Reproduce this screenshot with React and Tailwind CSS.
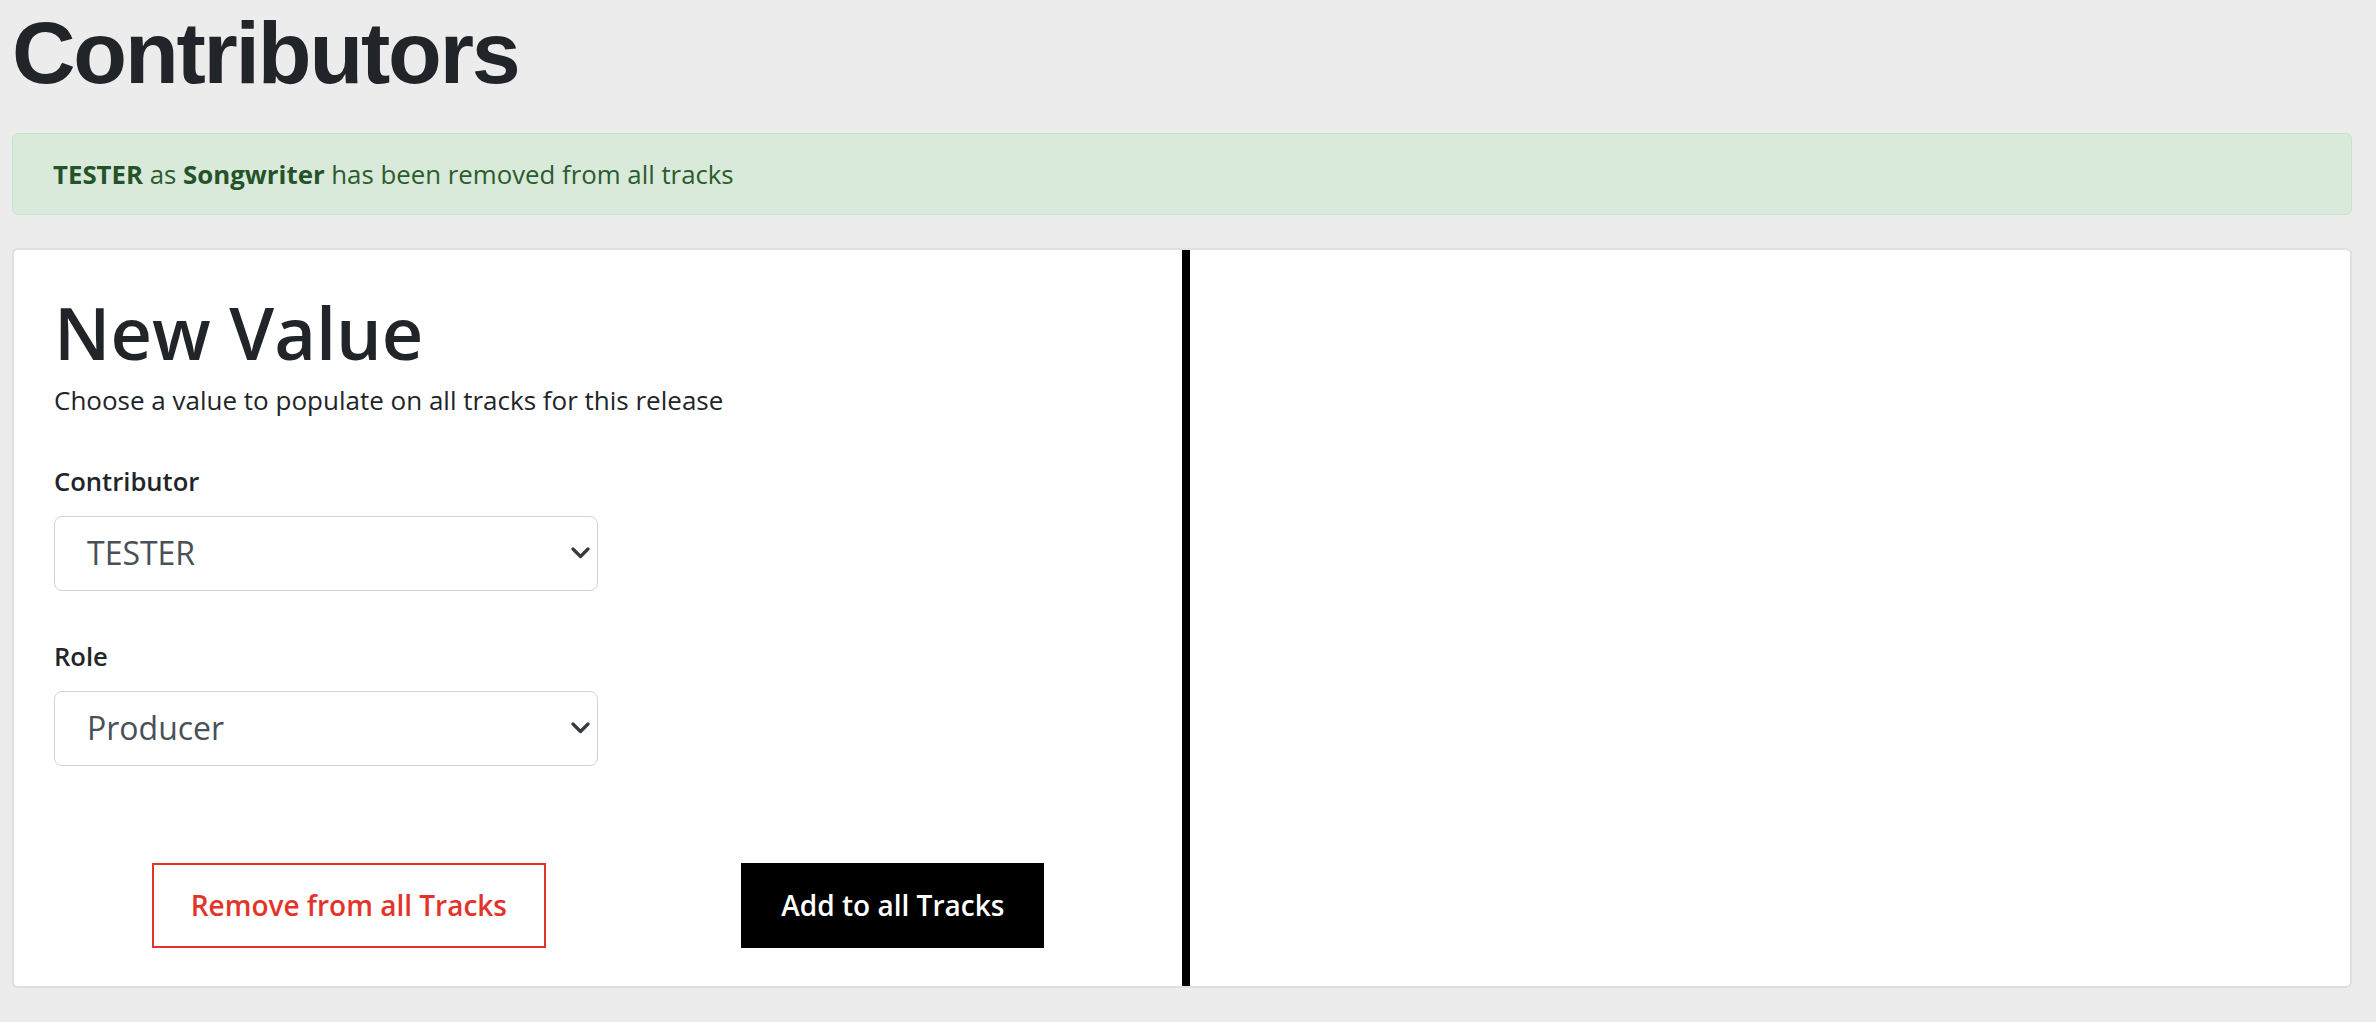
import { useState } from 'react';

const contributors = ['TESTER'];
const roles = ['Producer', 'Songwriter', 'Composer', 'Performer'];

const Chevron = () => (
  <svg
    className="pointer-events-none absolute right-[8px] top-1/2 -translate-y-1/2"
    width="19"
    height="13"
    viewBox="0 0 19 13"
    fill="none"
  >
    <path d="M2 2.5l7.5 7.5L17 2.5" stroke="#343a40" strokeWidth="3.2" strokeLinecap="round" strokeLinejoin="round" />
  </svg>
);

const Field = ({ label, value, options, onChange, className = '' }) => (
  <div className={className}>
    <label className="mb-4 block text-[25.6px] font-semibold leading-[36px] text-[#212529]">{label}</label>
    <div className="relative w-1/2">
      <select
        value={value}
        onChange={(e) => onChange(e.target.value)}
        className="h-[75px] w-full appearance-none rounded-lg border-[1.5px] border-[#cfd3d7] bg-white pl-[32px] pr-12 text-[32px] text-[#495057] outline-none"
      >
        {options.map((opt) => (
          <option key={opt} value={opt}>
            {opt}
          </option>
        ))}
      </select>
      <Chevron />
    </div>
  </div>
);

const App = () => {
  const [contributor, setContributor] = useState('TESTER');
  const [role, setRole] = useState('Producer');

  return (
    <div className="min-h-screen bg-[#ececec] pl-3 pr-6 font-['Open_Sans',sans-serif] text-[#212529]">
      <h1 className="font-['Liberation_Sans',Arial,sans-serif] text-[88px] font-bold leading-[1.2] tracking-[-0.025em] text-[#212529]">
        Contributors
      </h1>

      {/* Success alert */}
      <div className="mt-[27px] rounded-md border border-[#c6e2c9] bg-[#d9eadb] px-10 py-[22px] text-[25.8px] leading-[36px] text-[#2c5b2d]">
        <strong className="font-bold text-[#24532a]">TESTER</strong> as{' '}
        <strong className="font-bold text-[#24532a]">Songwriter</strong> has been removed from all tracks
      </div>

      {/* Card */}
      <div className="mt-[33px] grid grid-cols-2 rounded-md border-2 border-[#e0e0e0] bg-white">
        <div className="px-10 pb-[38px] pt-[39px]">
          <h2 className="text-[72px] font-semibold leading-[1.2] text-[#212529]">New Value</h2>
          <p className="mt-[7px] text-[26px] leading-[36px] text-[#212529]">
            Choose a value to populate on all tracks for this release
          </p>

          <Field
            className="mt-[46px]"
            label="Contributor"
            value={contributor}
            options={contributors}
            onChange={setContributor}
          />
          <Field className="mt-12" label="Role" value={role} options={roles} onChange={setRole} />

          <div className="mt-[97px] flex justify-around">
            <button className="flex h-[85px] items-center border-2 border-[#e3342b] bg-white px-[37px] text-[28px] font-semibold text-[#e3342b]">
              Remove from all Tracks
            </button>
            <button className="flex h-[85px] items-center border-2 border-black bg-black px-[38px] text-[28px] font-semibold text-white">
              Add to all Tracks
            </button>
          </div>
        </div>
        <div className="border-l-8 border-black" />
      </div>
    </div>
  );
};

export default App;
